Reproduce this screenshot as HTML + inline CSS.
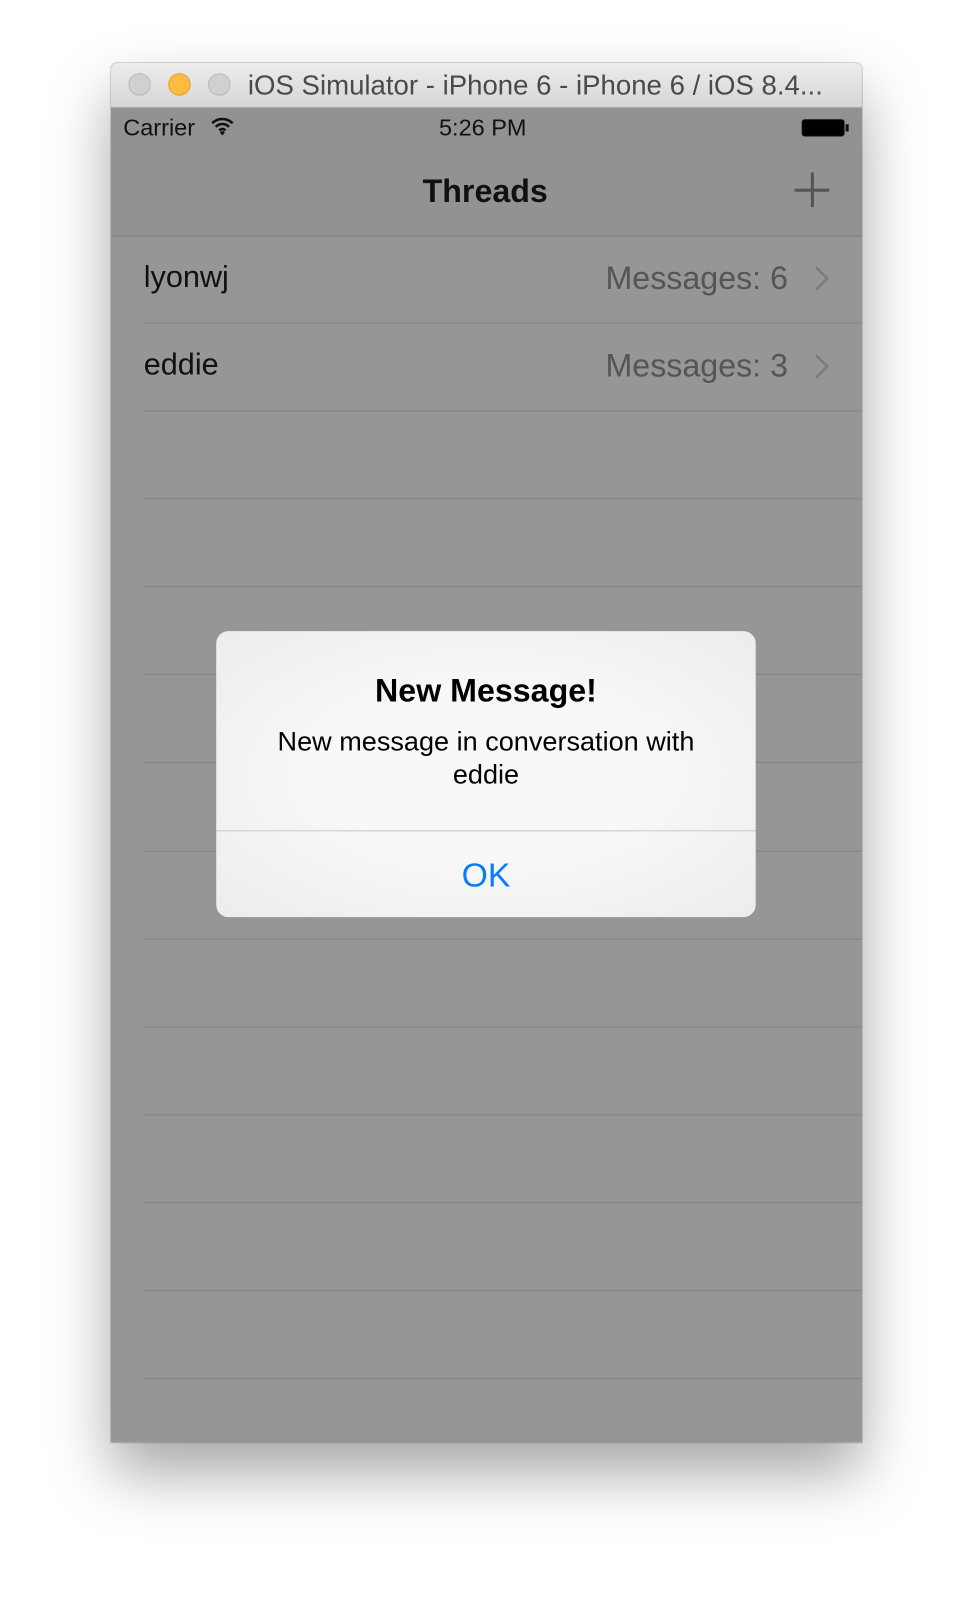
<!DOCTYPE html>
<html><head><style>
body{margin:0;width:974px;height:1602px;background:#fff;position:relative;overflow:hidden;font-family:"Liberation Sans",sans-serif}
.win{position:absolute;left:111px;top:63px;width:735px;height:1350px;transform:scale(1.0217);transform-origin:0 0;border-radius:6px 6px 0 0;box-shadow:0 30px 60px rgba(0,0,0,.35),0 0 0 1px rgba(0,0,0,.15);background:#969696;overflow:hidden}
.title{position:absolute;left:0;top:0;width:735px;height:43px;background:linear-gradient(#ececec,#d6d6d6);border-bottom:1px solid #b0b0b0}
.dot{position:absolute;top:10px;width:22px;height:22px;border-radius:50%;background:#d0d0d0;border:1px solid #b8b8b8;box-sizing:border-box}
.title span{position:absolute;left:134px;top:7px;font-size:27px;color:#4a4a4a;white-space:nowrap}
.nav{position:absolute;top:44px;left:0;width:735px;height:125px;background:#929292;border-bottom:1px solid #7e7e7e}
.t{position:absolute;white-space:nowrap}
.sep{position:absolute;left:32px;right:0;height:1px;background:#838383}
.alert{position:absolute;left:103px;top:556px;width:528px;height:280px;border-radius:12px;background:radial-gradient(ellipse at center,#f8f8f8 40%,#ececec);overflow:hidden}
</style></head><body>
<div class="win">
 <div class="title">
  <div class="dot" style="left:17px"></div>
  <div class="dot" style="left:56px;background:#fdbc40;border-color:#e0a030"></div>
  <div class="dot" style="left:95px"></div>
  <span>iOS Simulator - iPhone 6 - iPhone 6 / iOS 8.4...</span>
 </div>
 <div class="nav">
  <div class="t" style="left:12px;top:6px;font-size:23px;color:#111">Carrier</div>
  <svg style="position:absolute;left:97px;top:9px" width="24" height="18" viewBox="0 0 24 18"><path d="M2 6a14 14 0 0 1 20 0M5.5 9.5a9 9 0 0 1 13 0M9 13a4 4 0 0 1 6 0" stroke="#111" stroke-width="2.5" fill="none"/><path d="M12 18l-2.5-3a3 3 0 0 1 5 0z" fill="#111"/></svg>
  <div class="t" style="left:321px;top:6px;font-size:23px;color:#111">5:26 PM</div>
  <div style="position:absolute;left:676px;top:11px;width:42px;height:17px;border:1.5px solid #111;border-radius:3px;box-sizing:border-box;background:#000"></div>
  <div style="position:absolute;left:719px;top:16px;width:3px;height:7px;background:#111"></div>
  <div class="t" style="left:305px;top:63px;font-size:31.5px;font-weight:bold;color:#111">Threads</div>
  <div style="position:absolute;left:669px;top:79px;width:34px;height:2.5px;background:#555"></div>
  <div style="position:absolute;left:685px;top:63px;width:2.5px;height:34px;background:#555"></div>
 </div>
 <div class="t" style="left:32px;top:193px;font-size:30px;color:#111">lyonwj</div>
 <div class="t" style="left:484px;top:192px;font-size:31.5px;color:#555">Messages: 6</div>
 <div class="t" style="left:32px;top:279px;font-size:30px;color:#111">eddie</div>
 <div class="t" style="left:484px;top:278px;font-size:31.5px;color:#555">Messages: 3</div>
 <svg style="position:absolute;left:687px;top:198px" width="16" height="26"><path d="M3 2l11 11-11 11" stroke="#7a7a7a" stroke-width="2.5" fill="none"/></svg>
 <svg style="position:absolute;left:687px;top:284px" width="16" height="26"><path d="M3 2l11 11-11 11" stroke="#7a7a7a" stroke-width="2.5" fill="none"/></svg>
 <div class="sep" style="top:254px"></div>
 <div class="sep" style="top:340px"></div>
 <div class="sep" style="top:426px"></div>
 <div class="sep" style="top:512px"></div>
 <div class="sep" style="top:598px"></div>
 <div class="sep" style="top:684px"></div>
 <div class="sep" style="top:771px"></div>
 <div class="sep" style="top:857px"></div>
 <div class="sep" style="top:943px"></div>
 <div class="sep" style="top:1029px"></div>
 <div class="sep" style="top:1115px"></div>
 <div class="sep" style="top:1201px"></div>
 <div class="sep" style="top:1287px"></div>
 <div class="alert">
  <div class="t" style="left:0;width:528px;text-align:center;top:40px;font-size:31.5px;font-weight:bold;color:#000">New Message!</div>
  <div class="t" style="left:0;width:528px;text-align:center;top:92px;font-size:26.5px;line-height:32px;color:#000">New message in conversation with<br>eddie</div>
  <div style="position:absolute;left:0;right:0;top:195px;height:1px;background:#c8c8c8"></div>
  <div class="t" style="left:0;width:528px;text-align:center;top:220px;font-size:33px;color:#0a7aff">OK</div>
 </div>
</div>
</body></html>
